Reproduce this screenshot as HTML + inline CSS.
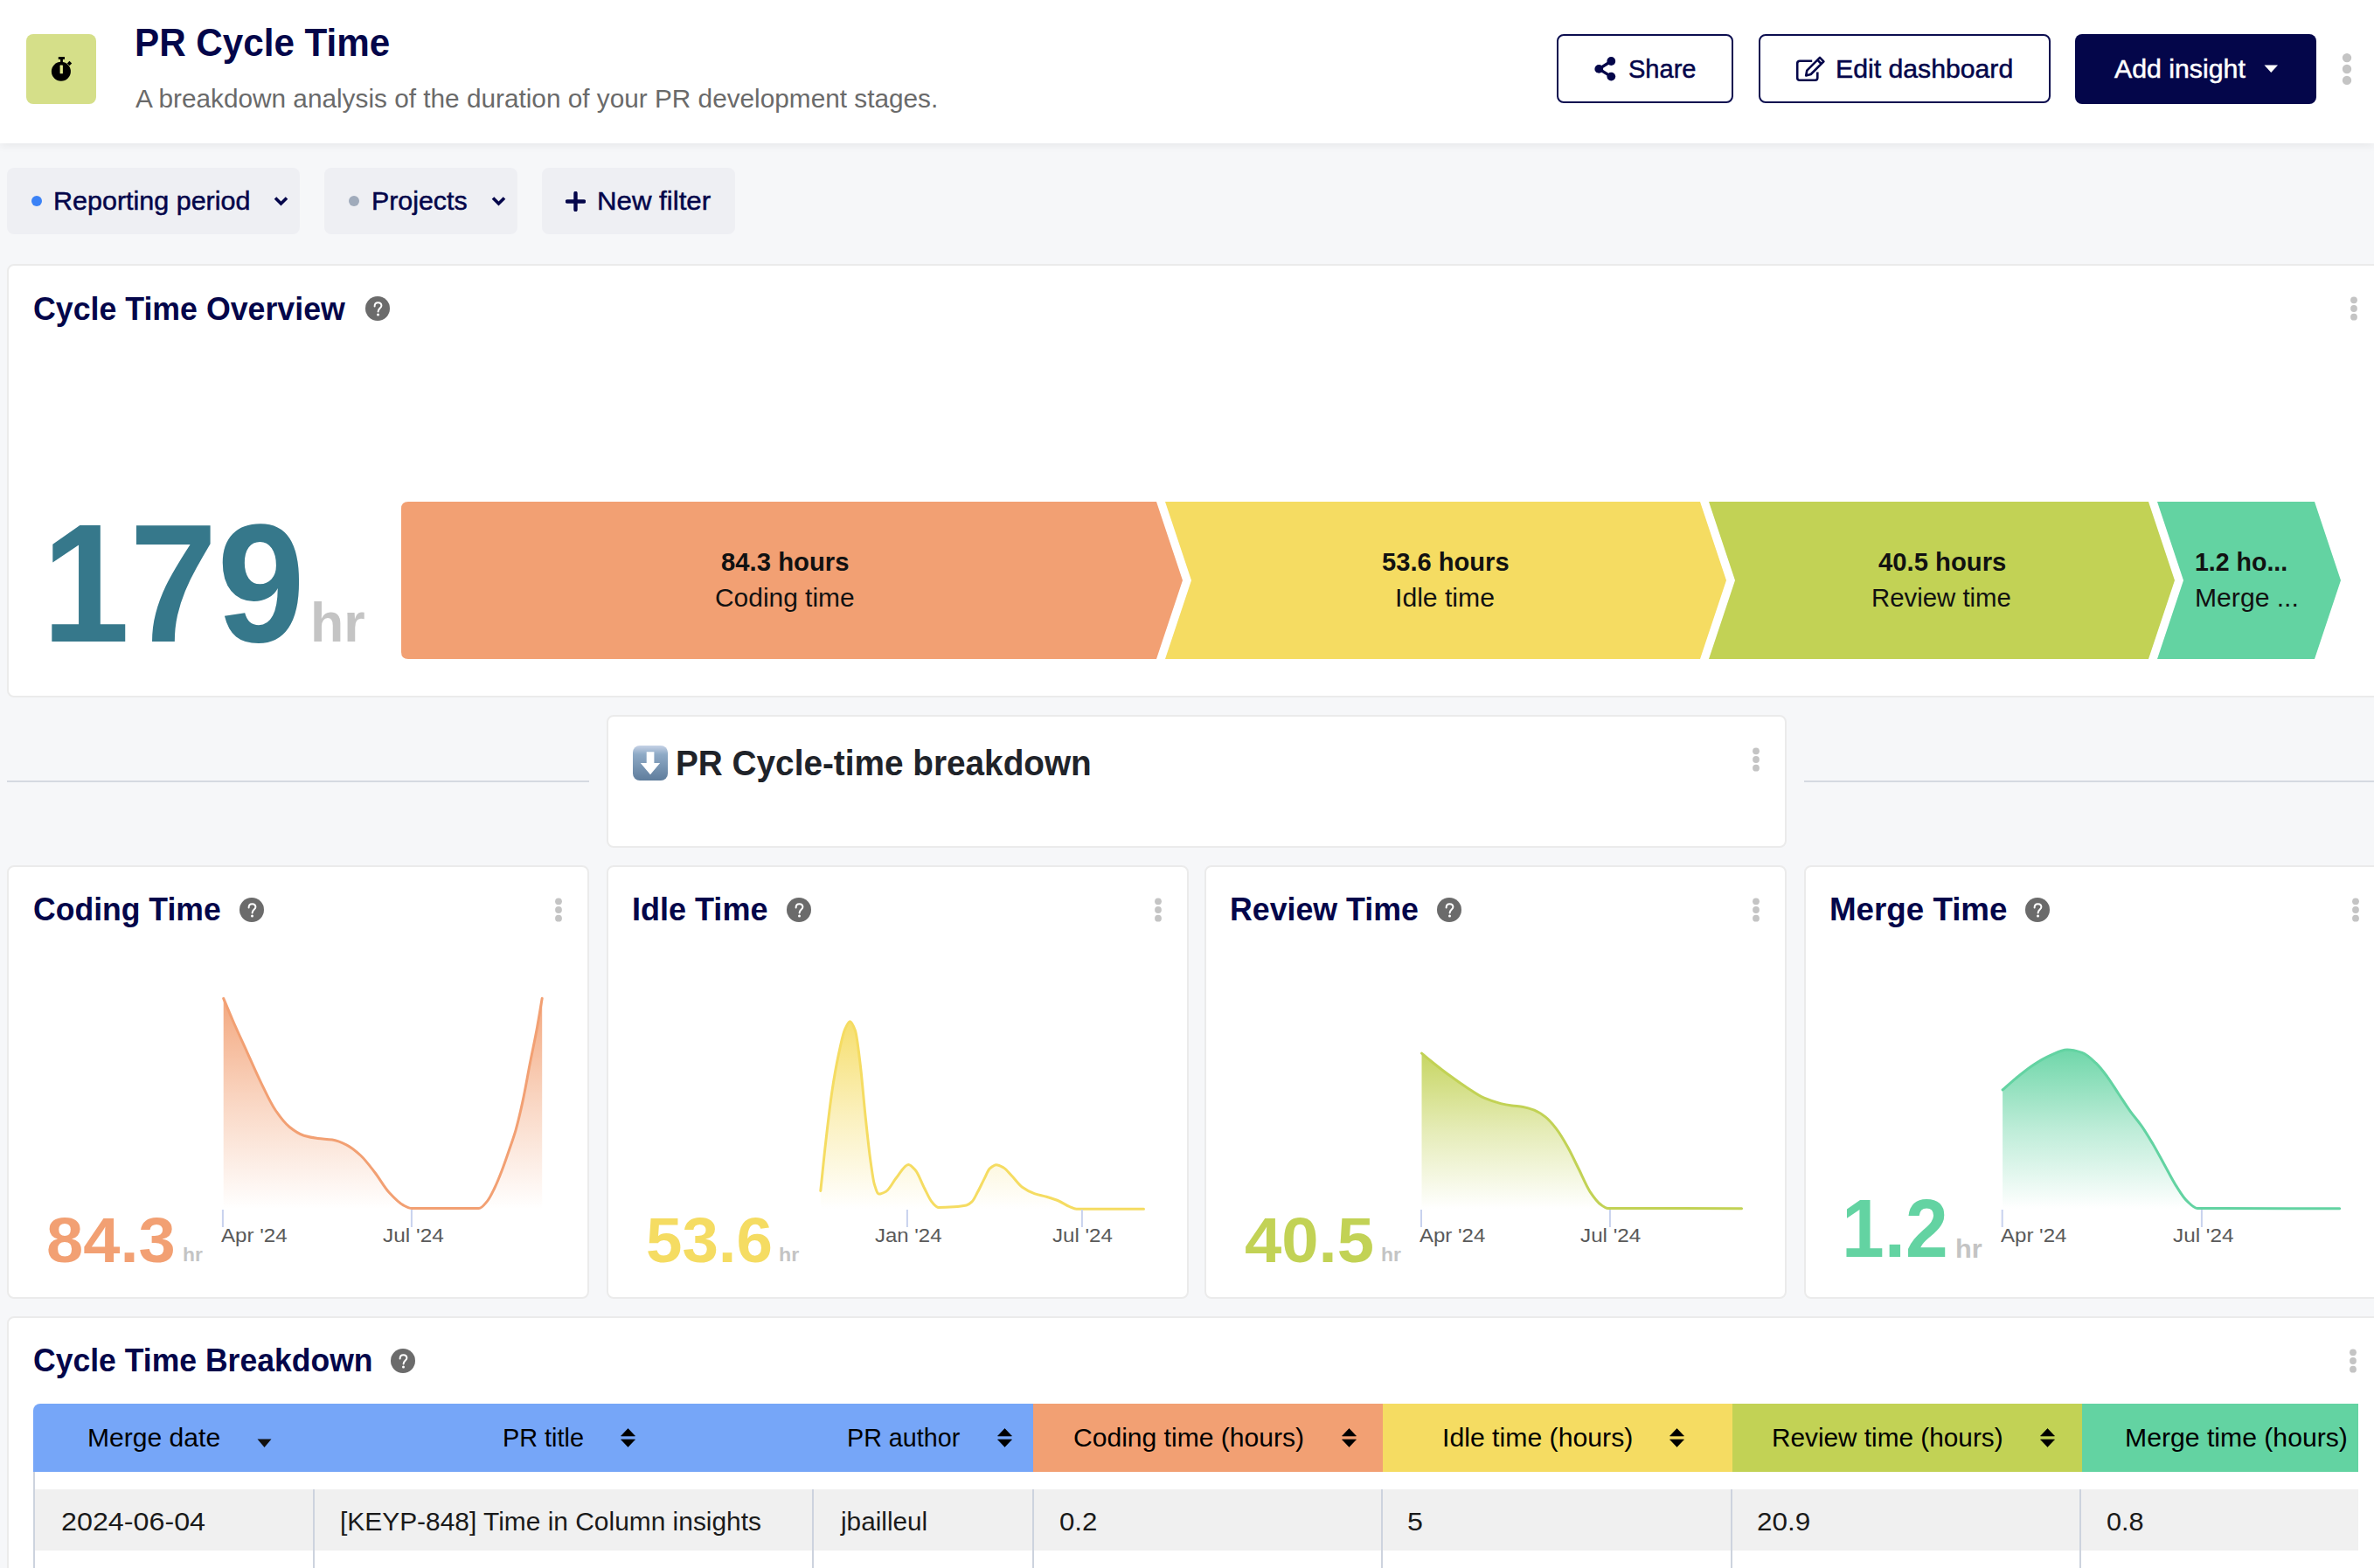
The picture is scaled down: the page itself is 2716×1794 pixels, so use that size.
<!DOCTYPE html><html><head><meta charset="utf-8"><style>
html,body{margin:0;padding:0;width:2716px;height:1794px;overflow:hidden;background:#f6f7f9;font-family:"Liberation Sans",sans-serif;}
.ab{position:absolute;display:block}
.tx{position:absolute;white-space:nowrap;transform-origin:0 0;font-family:"Liberation Sans",sans-serif;}
.card{position:absolute;background:#fff;border:2px solid #ebebeb;border-radius:8px;box-sizing:border-box}
.pill{position:absolute;background:#eeeff3;border-radius:8px;top:192px;height:76px}
</style></head><body>
<div class="ab" style="left:0;top:0;width:2716px;height:164px;background:#fff;box-shadow:0 2px 10px rgba(0,0,0,0.07)"></div>
<div class="ab" style="left:30px;top:39px;width:80px;height:80px;border-radius:8px;background:#d5df89"></div>
<svg class="ab" style="left:56px;top:63px" width="30" height="32" viewBox="0 0 30 32"><rect x="10.8" y="2.1" width="7.2" height="2.8" fill="#000"/><rect x="13.1" y="4" width="2.8" height="5" fill="#000"/><rect x="21.6" y="7.6" width="3.8" height="3.8" transform="rotate(45 23.5 9.5)" fill="#000"/><circle cx="13.9" cy="18.7" r="11" fill="#000"/><rect x="12.6" y="11.6" width="3.3" height="9.7" rx="0.6" fill="#dfe88c"/></svg>
<div class="ab" style="left:1781px;top:39px;width:202px;height:79px;box-sizing:border-box;border:2.5px solid #0b0d4f;border-radius:8px"></div>
<svg class="ab" style="left:1822px;top:63px" width="28" height="31" viewBox="0 0 28 31"><line x1="21.3" y1="7" x2="7.3" y2="15.9" stroke="#04064a" stroke-width="3.4"/><line x1="21.3" y1="24.6" x2="7.3" y2="15.9" stroke="#04064a" stroke-width="3.4"/><circle cx="21.3" cy="7" r="4.9" fill="#04064a"/><circle cx="7.3" cy="15.9" r="4.9" fill="#04064a"/><circle cx="21.3" cy="24.6" r="4.9" fill="#04064a"/></svg>
<div class="ab" style="left:2012px;top:39px;width:334px;height:79px;box-sizing:border-box;border:2.5px solid #0b0d4f;border-radius:8px"></div>
<svg class="ab" style="left:2054px;top:63px" width="36" height="32" viewBox="0 0 36 32"><path d="M19.2,6.7 H5 a2.8,2.8 0 0 0 -2.8,2.8 V26 a2.8,2.8 0 0 0 2.8,2.8 H22.5 a2.8,2.8 0 0 0 2.8,-2.8 V19.5" fill="none" stroke="#04064a" stroke-width="2.6"/><path d="M12.2,23.4 L13.3,17.6 L28,2.9 L32.4,7.3 L17.7,22 Z M25.3,5.6 L29.7,10" fill="none" stroke="#04064a" stroke-width="2.6" stroke-linejoin="round"/></svg>
<div class="ab" style="left:2374px;top:39px;width:276px;height:80px;border-radius:8px;background:#04064a"></div>
<svg class="ab" style="left:2590px;top:74px" width="17" height="10" viewBox="0 0 17 10"><path d="M0.5,0.5 H16 L8.25,9 Z" fill="#fff"/></svg>
<svg class="ab" style="left:2679.0px;top:58.5px" width="12" height="40" viewBox="0 0 12 40"><circle cx="6" cy="7.1" r="5.2" fill="#c4c4c4"/><circle cx="6" cy="20" r="5.2" fill="#c4c4c4"/><circle cx="6" cy="32.9" r="5.2" fill="#c4c4c4"/></svg>
<div class="pill" style="left:8px;width:335px"></div>
<div class="ab" style="left:36px;top:224px;width:12px;height:12px;border-radius:6px;background:#3b82f6"></div>
<svg class="ab" style="left:313px;top:224px" width="17" height="12" viewBox="0 0 17 12"><path d="M2,2.5 L8.5,9 L15,2.5" fill="none" stroke="#04064a" stroke-width="3.6"/></svg>
<div class="pill" style="left:371px;width:221px"></div>
<div class="ab" style="left:399px;top:224px;width:12px;height:12px;border-radius:6px;background:#a0abbb"></div>
<svg class="ab" style="left:562px;top:224px" width="17" height="12" viewBox="0 0 17 12"><path d="M2,2.5 L8.5,9 L15,2.5" fill="none" stroke="#04064a" stroke-width="3.6"/></svg>
<div class="pill" style="left:620px;width:221px"></div>
<svg class="ab" style="left:647px;top:219px" width="23" height="23" viewBox="0 0 23 23"><path d="M11.5,2 V21 M2,11.5 H21" stroke="#04064a" stroke-width="4.4" stroke-linecap="round"/></svg>
<div class="card" style="left:8px;top:302px;width:2740px;height:496px"></div>
<svg class="ab" style="left:417.7px;top:339.0px" width="28" height="28" viewBox="0 0 28 28"><circle cx="14" cy="14" r="14" fill="#6b6b6b"/><path d="M10.6,11.4 C10.6,8.6 12.2,7.2 14.5,7.2 C16.9,7.2 18.4,8.8 18.4,10.8 C18.4,13.4 14.6,13.9 14.6,17.6" fill="none" stroke="#fff" stroke-width="2" stroke-linecap="round"/><circle cx="14.5" cy="21" r="1.5" fill="#fff"/></svg>
<svg class="ab" style="left:2687.0px;top:333.0px" width="12" height="40" viewBox="0 0 12 40"><circle cx="6" cy="10.35" r="3.9" fill="#c4c4c4"/><circle cx="6" cy="20" r="3.9" fill="#c4c4c4"/><circle cx="6" cy="29.65" r="3.9" fill="#c4c4c4"/></svg>
<svg class="ab" style="left:0;top:0" width="2716" height="1794" viewBox="0 0 2716 1794">
<path d="M467,574 H1323 L1353,664 L1323,754 H467 Q459,754 459,746 V582 Q459,574 467,574 Z" fill="#f2a073"/>
<path d="M1333,574 H1945 L1975,664 L1945,754 H1333 L1363,664 Z" fill="#f5dc62"/>
<path d="M1955,574 H2458 L2488,664 L2458,754 H1955 L1985,664 Z" fill="#c2d255"/>
<path d="M2468,574 H2648 L2678,664 L2648,754 H2468 L2498,664 Z" fill="#63d3a2"/>
</svg>
<div class="ab" style="left:8px;top:893px;width:666px;height:2px;background:#d5d9e1"></div>
<div class="ab" style="left:2064px;top:893px;width:652px;height:2px;background:#d5d9e1"></div>
<div class="card" style="left:694px;top:818px;width:1350px;height:152px"></div>
<svg class="ab" style="left:724px;top:853px" width="40" height="40" viewBox="0 0 40 40"><defs><linearGradient id="em" x1="0" y1="0" x2="0" y2="1"><stop offset="0" stop-color="#c6d2e6"/><stop offset="0.25" stop-color="#8eaac6"/><stop offset="1" stop-color="#5f7d9c"/></linearGradient></defs><rect x="0" y="0" width="40" height="40" rx="8" fill="url(#em)"/><path d="M15.7,7.3 H24.4 V20 H31.1 L20,33.2 L8.8,20 H15.7 Z" fill="#fff"/></svg>
<svg class="ab" style="left:2003.0px;top:849.0px" width="12" height="40" viewBox="0 0 12 40"><circle cx="6" cy="10.35" r="3.9" fill="#c4c4c4"/><circle cx="6" cy="20" r="3.9" fill="#c4c4c4"/><circle cx="6" cy="29.65" r="3.9" fill="#c4c4c4"/></svg>
<div class="card" style="left:8px;top:990px;width:666px;height:496px"></div>
<svg class="ab" style="left:273.8px;top:1026.7px" width="28" height="28" viewBox="0 0 28 28"><circle cx="14" cy="14" r="14" fill="#6b6b6b"/><path d="M10.6,11.4 C10.6,8.6 12.2,7.2 14.5,7.2 C16.9,7.2 18.4,8.8 18.4,10.8 C18.4,13.4 14.6,13.9 14.6,17.6" fill="none" stroke="#fff" stroke-width="2" stroke-linecap="round"/><circle cx="14.5" cy="21" r="1.5" fill="#fff"/></svg>
<svg class="ab" style="left:633.0px;top:1021.0px" width="12" height="40" viewBox="0 0 12 40"><circle cx="6" cy="10.35" r="3.9" fill="#c4c4c4"/><circle cx="6" cy="20" r="3.9" fill="#c4c4c4"/><circle cx="6" cy="29.65" r="3.9" fill="#c4c4c4"/></svg>
<div class="card" style="left:694px;top:990px;width:666px;height:496px"></div>
<svg class="ab" style="left:899.8px;top:1026.7px" width="28" height="28" viewBox="0 0 28 28"><circle cx="14" cy="14" r="14" fill="#6b6b6b"/><path d="M10.6,11.4 C10.6,8.6 12.2,7.2 14.5,7.2 C16.9,7.2 18.4,8.8 18.4,10.8 C18.4,13.4 14.6,13.9 14.6,17.6" fill="none" stroke="#fff" stroke-width="2" stroke-linecap="round"/><circle cx="14.5" cy="21" r="1.5" fill="#fff"/></svg>
<svg class="ab" style="left:1319.0px;top:1021.0px" width="12" height="40" viewBox="0 0 12 40"><circle cx="6" cy="10.35" r="3.9" fill="#c4c4c4"/><circle cx="6" cy="20" r="3.9" fill="#c4c4c4"/><circle cx="6" cy="29.65" r="3.9" fill="#c4c4c4"/></svg>
<div class="card" style="left:1378px;top:990px;width:666px;height:496px"></div>
<svg class="ab" style="left:1643.8px;top:1026.7px" width="28" height="28" viewBox="0 0 28 28"><circle cx="14" cy="14" r="14" fill="#6b6b6b"/><path d="M10.6,11.4 C10.6,8.6 12.2,7.2 14.5,7.2 C16.9,7.2 18.4,8.8 18.4,10.8 C18.4,13.4 14.6,13.9 14.6,17.6" fill="none" stroke="#fff" stroke-width="2" stroke-linecap="round"/><circle cx="14.5" cy="21" r="1.5" fill="#fff"/></svg>
<svg class="ab" style="left:2003.0px;top:1021.0px" width="12" height="40" viewBox="0 0 12 40"><circle cx="6" cy="10.35" r="3.9" fill="#c4c4c4"/><circle cx="6" cy="20" r="3.9" fill="#c4c4c4"/><circle cx="6" cy="29.65" r="3.9" fill="#c4c4c4"/></svg>
<div class="card" style="left:2064px;top:990px;width:666px;height:496px"></div>
<svg class="ab" style="left:2316.9px;top:1026.7px" width="28" height="28" viewBox="0 0 28 28"><circle cx="14" cy="14" r="14" fill="#6b6b6b"/><path d="M10.6,11.4 C10.6,8.6 12.2,7.2 14.5,7.2 C16.9,7.2 18.4,8.8 18.4,10.8 C18.4,13.4 14.6,13.9 14.6,17.6" fill="none" stroke="#fff" stroke-width="2" stroke-linecap="round"/><circle cx="14.5" cy="21" r="1.5" fill="#fff"/></svg>
<svg class="ab" style="left:2689.0px;top:1021.0px" width="12" height="40" viewBox="0 0 12 40"><circle cx="6" cy="10.35" r="3.9" fill="#c4c4c4"/><circle cx="6" cy="20" r="3.9" fill="#c4c4c4"/><circle cx="6" cy="29.65" r="3.9" fill="#c4c4c4"/></svg>
<svg class="ab" style="left:0;top:0" width="2716" height="1794" viewBox="0 0 2716 1794">
<defs>
<linearGradient id="g_coding" x1="0" y1="0" x2="0" y2="1"><stop offset="0" stop-color="#f2a073" stop-opacity="0.92"/><stop offset="0.5" stop-color="#f2a073" stop-opacity="0.42"/><stop offset="1" stop-color="#f2a073" stop-opacity="0.0"/></linearGradient>
<linearGradient id="g_idle" x1="0" y1="0" x2="0" y2="1"><stop offset="0" stop-color="#f5dc62" stop-opacity="0.92"/><stop offset="0.5" stop-color="#f5dc62" stop-opacity="0.42"/><stop offset="1" stop-color="#f5dc62" stop-opacity="0.0"/></linearGradient>
<linearGradient id="g_review" x1="0" y1="0" x2="0" y2="1"><stop offset="0" stop-color="#c2d255" stop-opacity="0.92"/><stop offset="0.5" stop-color="#c2d255" stop-opacity="0.42"/><stop offset="1" stop-color="#c2d255" stop-opacity="0.0"/></linearGradient>
<linearGradient id="g_merge" x1="0" y1="0" x2="0" y2="1"><stop offset="0" stop-color="#63d3a2" stop-opacity="0.92"/><stop offset="0.5" stop-color="#63d3a2" stop-opacity="0.42"/><stop offset="1" stop-color="#63d3a2" stop-opacity="0.0"/></linearGradient>
</defs>
<path d="M255.7,1142.3 C259.2,1150.7 262.8,1159.4 266.3,1167.5 C271.7,1179.9 277.1,1191.4 282.5,1203.3 C287.9,1215.3 293.4,1228.0 298.8,1239.1 C304.2,1250.1 309.6,1262.1 315.0,1270.0 C320.4,1278.0 325.9,1285.2 331.3,1289.5 C336.7,1293.8 342.2,1297.6 347.6,1299.2 C353.0,1300.8 358.4,1301.8 363.8,1302.5 C369.2,1303.2 374.7,1303.3 380.1,1304.1 C385.5,1304.9 390.9,1307.2 396.3,1309.8 C401.7,1312.4 407.2,1317.0 412.6,1322.0 C418.0,1327.0 423.5,1334.5 428.9,1341.5 C434.3,1348.5 439.7,1358.4 445.1,1364.3 C450.5,1370.2 456.0,1376.1 461.4,1378.9 C464.7,1380.6 468.1,1382.6 471.4,1382.6 C496.9,1382.6 522.3,1382.6 547.8,1382.6 C551.1,1382.6 554.3,1378.0 557.6,1374.1 C560.3,1370.9 563.0,1365.0 565.7,1359.5 C568.4,1353.9 571.2,1347.0 573.9,1340.0 C576.6,1333.0 579.3,1325.1 582.0,1317.2 C584.7,1309.3 587.4,1302.2 590.1,1292.8 C592.8,1283.2 595.6,1271.3 598.3,1258.6 C601.0,1246.1 603.7,1230.1 606.4,1216.3 C609.1,1202.5 611.8,1190.4 614.5,1175.7 C616.4,1165.4 618.3,1153.4 620.2,1142.3 L620.2,1383.0 L255.7,1383.0 Z" fill="url(#g_coding)"/>
<path d="M255.7,1142.3 C259.2,1150.7 262.8,1159.4 266.3,1167.5 C271.7,1179.9 277.1,1191.4 282.5,1203.3 C287.9,1215.3 293.4,1228.0 298.8,1239.1 C304.2,1250.1 309.6,1262.1 315.0,1270.0 C320.4,1278.0 325.9,1285.2 331.3,1289.5 C336.7,1293.8 342.2,1297.6 347.6,1299.2 C353.0,1300.8 358.4,1301.8 363.8,1302.5 C369.2,1303.2 374.7,1303.3 380.1,1304.1 C385.5,1304.9 390.9,1307.2 396.3,1309.8 C401.7,1312.4 407.2,1317.0 412.6,1322.0 C418.0,1327.0 423.5,1334.5 428.9,1341.5 C434.3,1348.5 439.7,1358.4 445.1,1364.3 C450.5,1370.2 456.0,1376.1 461.4,1378.9 C464.7,1380.6 468.1,1382.6 471.4,1382.6 C496.9,1382.6 522.3,1382.6 547.8,1382.6 C551.1,1382.6 554.3,1378.0 557.6,1374.1 C560.3,1370.9 563.0,1365.0 565.7,1359.5 C568.4,1353.9 571.2,1347.0 573.9,1340.0 C576.6,1333.0 579.3,1325.1 582.0,1317.2 C584.7,1309.3 587.4,1302.2 590.1,1292.8 C592.8,1283.2 595.6,1271.3 598.3,1258.6 C601.0,1246.1 603.7,1230.1 606.4,1216.3 C609.1,1202.5 611.8,1190.4 614.5,1175.7 C616.4,1165.4 618.3,1153.4 620.2,1142.3" fill="none" stroke="#f2a073" stroke-width="3" stroke-linecap="round" stroke-linejoin="round"/>
<path d="M938.8,1362.4 C940.8,1343.8 942.7,1323.8 944.7,1306.7 C947.1,1285.5 949.6,1264.1 952.0,1248.0 C954.4,1231.9 956.9,1218.2 959.3,1206.9 C961.8,1195.4 964.2,1182.9 966.7,1177.6 C968.6,1173.4 970.6,1168.8 972.5,1168.8 C974.5,1168.8 976.4,1173.7 978.4,1179.1 C980.4,1184.5 982.3,1202.8 984.3,1218.7 C986.2,1234.3 988.2,1259.3 990.1,1277.4 C992.1,1295.8 994.0,1314.9 996.0,1328.7 C997.5,1339.0 998.9,1350.4 1000.4,1355.1 C1002.1,1360.6 1003.8,1366.1 1005.5,1366.1 C1008.2,1366.1 1010.9,1364.7 1013.6,1363.2 C1017.5,1361.1 1021.4,1352.5 1025.3,1347.8 C1030.0,1342.2 1034.6,1332.4 1039.3,1332.4 C1042.0,1332.4 1044.7,1335.9 1047.4,1339.0 C1050.8,1342.9 1054.2,1353.0 1057.6,1359.5 C1060.5,1365.1 1063.5,1372.4 1066.4,1375.6 C1068.9,1378.3 1071.3,1381.5 1073.8,1381.5 C1079.7,1381.5 1085.5,1381.2 1091.4,1380.8 C1096.1,1380.5 1100.9,1380.1 1105.6,1379.0 C1107.7,1378.5 1109.9,1376.9 1112.0,1374.9 C1114.2,1372.9 1116.3,1367.8 1118.5,1363.8 C1121.0,1359.2 1123.5,1353.7 1126.0,1348.9 C1128.1,1344.8 1130.3,1338.8 1132.4,1336.9 C1134.9,1334.7 1137.4,1332.7 1139.9,1332.7 C1142.7,1332.7 1145.4,1334.4 1148.2,1336.0 C1151.3,1337.7 1154.4,1342.0 1157.5,1345.2 C1161.5,1349.3 1165.5,1355.3 1169.5,1358.2 C1174.1,1361.5 1178.8,1364.0 1183.4,1365.6 C1188.0,1367.2 1192.7,1367.9 1197.3,1369.3 C1201.9,1370.7 1206.6,1372.1 1211.2,1374.0 C1215.2,1375.7 1219.3,1378.8 1223.3,1380.4 C1226.1,1381.5 1228.8,1383.2 1231.6,1383.2 C1257.2,1383.2 1282.9,1383.2 1308.5,1383.2 L1308.5,1383.0 L938.8,1383.0 Z" fill="url(#g_idle)"/>
<path d="M938.8,1362.4 C940.8,1343.8 942.7,1323.8 944.7,1306.7 C947.1,1285.5 949.6,1264.1 952.0,1248.0 C954.4,1231.9 956.9,1218.2 959.3,1206.9 C961.8,1195.4 964.2,1182.9 966.7,1177.6 C968.6,1173.4 970.6,1168.8 972.5,1168.8 C974.5,1168.8 976.4,1173.7 978.4,1179.1 C980.4,1184.5 982.3,1202.8 984.3,1218.7 C986.2,1234.3 988.2,1259.3 990.1,1277.4 C992.1,1295.8 994.0,1314.9 996.0,1328.7 C997.5,1339.0 998.9,1350.4 1000.4,1355.1 C1002.1,1360.6 1003.8,1366.1 1005.5,1366.1 C1008.2,1366.1 1010.9,1364.7 1013.6,1363.2 C1017.5,1361.1 1021.4,1352.5 1025.3,1347.8 C1030.0,1342.2 1034.6,1332.4 1039.3,1332.4 C1042.0,1332.4 1044.7,1335.9 1047.4,1339.0 C1050.8,1342.9 1054.2,1353.0 1057.6,1359.5 C1060.5,1365.1 1063.5,1372.4 1066.4,1375.6 C1068.9,1378.3 1071.3,1381.5 1073.8,1381.5 C1079.7,1381.5 1085.5,1381.2 1091.4,1380.8 C1096.1,1380.5 1100.9,1380.1 1105.6,1379.0 C1107.7,1378.5 1109.9,1376.9 1112.0,1374.9 C1114.2,1372.9 1116.3,1367.8 1118.5,1363.8 C1121.0,1359.2 1123.5,1353.7 1126.0,1348.9 C1128.1,1344.8 1130.3,1338.8 1132.4,1336.9 C1134.9,1334.7 1137.4,1332.7 1139.9,1332.7 C1142.7,1332.7 1145.4,1334.4 1148.2,1336.0 C1151.3,1337.7 1154.4,1342.0 1157.5,1345.2 C1161.5,1349.3 1165.5,1355.3 1169.5,1358.2 C1174.1,1361.5 1178.8,1364.0 1183.4,1365.6 C1188.0,1367.2 1192.7,1367.9 1197.3,1369.3 C1201.9,1370.7 1206.6,1372.1 1211.2,1374.0 C1215.2,1375.7 1219.3,1378.8 1223.3,1380.4 C1226.1,1381.5 1228.8,1383.2 1231.6,1383.2 C1257.2,1383.2 1282.9,1383.2 1308.5,1383.2" fill="none" stroke="#f5dc62" stroke-width="3" stroke-linecap="round" stroke-linejoin="round"/>
<path d="M1626.5,1205.2 C1631.2,1209.0 1635.8,1213.0 1640.5,1216.7 C1646.9,1221.8 1653.2,1226.7 1659.6,1231.3 C1666.0,1236.0 1672.4,1240.6 1678.8,1244.7 C1685.2,1248.8 1691.5,1253.5 1697.9,1256.2 C1704.3,1258.9 1710.6,1261.1 1717.0,1262.6 C1721.3,1263.6 1725.5,1264.3 1729.8,1264.9 C1734.0,1265.5 1738.3,1265.7 1742.5,1266.4 C1746.8,1267.1 1751.0,1268.5 1755.3,1270.2 C1759.5,1271.9 1763.8,1274.6 1768.0,1277.9 C1772.3,1281.2 1776.5,1286.3 1780.8,1291.9 C1785.0,1297.4 1789.3,1304.8 1793.5,1312.3 C1797.8,1319.9 1802.0,1329.3 1806.3,1337.8 C1810.5,1346.3 1814.8,1357.0 1819.0,1363.3 C1823.3,1369.7 1827.5,1375.6 1831.8,1378.6 C1834.3,1380.4 1836.9,1382.5 1839.4,1382.5 C1844.6,1382.5 1849.8,1382.5 1855.0,1382.5 C1900.9,1382.5 1946.7,1382.7 1992.6,1382.8 L1992.6,1383.0 L1626.5,1383.0 Z" fill="url(#g_review)"/>
<path d="M1626.5,1205.2 C1631.2,1209.0 1635.8,1213.0 1640.5,1216.7 C1646.9,1221.8 1653.2,1226.7 1659.6,1231.3 C1666.0,1236.0 1672.4,1240.6 1678.8,1244.7 C1685.2,1248.8 1691.5,1253.5 1697.9,1256.2 C1704.3,1258.9 1710.6,1261.1 1717.0,1262.6 C1721.3,1263.6 1725.5,1264.3 1729.8,1264.9 C1734.0,1265.5 1738.3,1265.7 1742.5,1266.4 C1746.8,1267.1 1751.0,1268.5 1755.3,1270.2 C1759.5,1271.9 1763.8,1274.6 1768.0,1277.9 C1772.3,1281.2 1776.5,1286.3 1780.8,1291.9 C1785.0,1297.4 1789.3,1304.8 1793.5,1312.3 C1797.8,1319.9 1802.0,1329.3 1806.3,1337.8 C1810.5,1346.3 1814.8,1357.0 1819.0,1363.3 C1823.3,1369.7 1827.5,1375.6 1831.8,1378.6 C1834.3,1380.4 1836.9,1382.5 1839.4,1382.5 C1844.6,1382.5 1849.8,1382.5 1855.0,1382.5 C1900.9,1382.5 1946.7,1382.7 1992.6,1382.8" fill="none" stroke="#c2d255" stroke-width="3" stroke-linecap="round" stroke-linejoin="round"/>
<path d="M2291.1,1246.9 C2296.1,1242.5 2301.2,1237.9 2306.2,1233.8 C2312.7,1228.5 2319.3,1223.1 2325.8,1218.8 C2332.3,1214.5 2338.9,1210.5 2345.4,1207.7 C2351.9,1204.9 2358.5,1201.1 2365.0,1201.1 C2370.7,1201.1 2376.3,1202.6 2382.0,1204.4 C2387.2,1206.0 2392.5,1211.3 2397.7,1216.2 C2402.1,1220.3 2406.4,1226.0 2410.8,1231.8 C2415.1,1237.6 2419.5,1245.0 2423.8,1251.5 C2428.2,1258.1 2432.5,1265.0 2436.9,1271.1 C2441.3,1277.2 2445.6,1281.9 2450.0,1288.1 C2454.4,1294.3 2458.7,1301.6 2463.1,1309.0 C2467.4,1316.3 2471.8,1324.7 2476.1,1332.5 C2480.5,1340.4 2484.8,1349.2 2489.2,1356.1 C2493.6,1363.0 2497.9,1370.4 2502.3,1374.4 C2506.2,1378.0 2510.1,1382.5 2514.0,1382.5 C2519.3,1382.5 2524.7,1382.5 2530.0,1382.5 C2578.9,1382.5 2627.8,1382.7 2676.7,1382.8 L2676.7,1383.0 L2291.1,1383.0 Z" fill="url(#g_merge)"/>
<path d="M2291.1,1246.9 C2296.1,1242.5 2301.2,1237.9 2306.2,1233.8 C2312.7,1228.5 2319.3,1223.1 2325.8,1218.8 C2332.3,1214.5 2338.9,1210.5 2345.4,1207.7 C2351.9,1204.9 2358.5,1201.1 2365.0,1201.1 C2370.7,1201.1 2376.3,1202.6 2382.0,1204.4 C2387.2,1206.0 2392.5,1211.3 2397.7,1216.2 C2402.1,1220.3 2406.4,1226.0 2410.8,1231.8 C2415.1,1237.6 2419.5,1245.0 2423.8,1251.5 C2428.2,1258.1 2432.5,1265.0 2436.9,1271.1 C2441.3,1277.2 2445.6,1281.9 2450.0,1288.1 C2454.4,1294.3 2458.7,1301.6 2463.1,1309.0 C2467.4,1316.3 2471.8,1324.7 2476.1,1332.5 C2480.5,1340.4 2484.8,1349.2 2489.2,1356.1 C2493.6,1363.0 2497.9,1370.4 2502.3,1374.4 C2506.2,1378.0 2510.1,1382.5 2514.0,1382.5 C2519.3,1382.5 2524.7,1382.5 2530.0,1382.5 C2578.9,1382.5 2627.8,1382.7 2676.7,1382.8" fill="none" stroke="#63d3a2" stroke-width="3" stroke-linecap="round" stroke-linejoin="round"/>
<rect x="253.9" y="1384" width="2" height="20" fill="#c8d2ee"/>
<rect x="469.9" y="1384" width="2" height="20" fill="#c8d2ee"/>
<rect x="1036.9" y="1384" width="2" height="20" fill="#c8d2ee"/>
<rect x="1236.9" y="1384" width="2" height="20" fill="#c8d2ee"/>
<rect x="1625.0" y="1384" width="2" height="20" fill="#c8d2ee"/>
<rect x="1840.9" y="1384" width="2" height="20" fill="#c8d2ee"/>
<rect x="2289.7" y="1384" width="2" height="20" fill="#c8d2ee"/>
<rect x="2517.9" y="1384" width="2" height="20" fill="#c8d2ee"/>
</svg>
<div class="card" style="left:8px;top:1506px;width:2740px;height:400px"></div>
<svg class="ab" style="left:446.8px;top:1542.9px" width="28" height="28" viewBox="0 0 28 28"><circle cx="14" cy="14" r="14" fill="#6b6b6b"/><path d="M10.6,11.4 C10.6,8.6 12.2,7.2 14.5,7.2 C16.9,7.2 18.4,8.8 18.4,10.8 C18.4,13.4 14.6,13.9 14.6,17.6" fill="none" stroke="#fff" stroke-width="2" stroke-linecap="round"/><circle cx="14.5" cy="21" r="1.5" fill="#fff"/></svg>
<svg class="ab" style="left:2686.0px;top:1537.0px" width="12" height="40" viewBox="0 0 12 40"><circle cx="6" cy="10.35" r="3.9" fill="#c4c4c4"/><circle cx="6" cy="20" r="3.9" fill="#c4c4c4"/><circle cx="6" cy="29.65" r="3.9" fill="#c4c4c4"/></svg>
<div class="ab" style="left:38px;top:1606px;width:1144px;height:78px;background:#76a6f8;border-top-left-radius:8px"></div>
<div class="ab" style="left:1182px;top:1606px;width:400px;height:78px;background:#f2a073"></div>
<div class="ab" style="left:1582px;top:1606px;width:400px;height:78px;background:#f5dc62"></div>
<div class="ab" style="left:1982px;top:1606px;width:399.5px;height:78px;background:#c2d255"></div>
<div class="ab" style="left:2381.5px;top:1606px;width:316.5px;height:78px;background:#63d3a2"></div>
<div class="ab" style="left:40px;top:1704px;width:2658px;height:70px;background:#f0f0f0"></div>
<div class="ab" style="left:38px;top:1684px;width:2px;height:110px;background:#cdd3de"></div>
<div class="ab" style="left:357.7px;top:1704px;width:2px;height:90px;background:#cdd3de"></div>
<div class="ab" style="left:929.0px;top:1704px;width:2px;height:90px;background:#cdd3de"></div>
<div class="ab" style="left:1180.5px;top:1704px;width:2px;height:90px;background:#cdd3de"></div>
<div class="ab" style="left:1579.7px;top:1704px;width:2px;height:90px;background:#cdd3de"></div>
<div class="ab" style="left:1979.5px;top:1704px;width:2px;height:90px;background:#cdd3de"></div>
<div class="ab" style="left:2378.6px;top:1704px;width:2px;height:90px;background:#cdd3de"></div>
<svg class="ab" style="left:710.4px;top:1634.0px" width="17" height="22" viewBox="0 0 17 22"><path d="M8.5,0.5 L16.5,9 L0.5,9 Z M0.5,13 L16.5,13 L8.5,21.5 Z" fill="#000" stroke="#000" stroke-width="0.6" stroke-linejoin="round"/></svg>
<svg class="ab" style="left:1141.3px;top:1634.0px" width="17" height="22" viewBox="0 0 17 22"><path d="M8.5,0.5 L16.5,9 L0.5,9 Z M0.5,13 L16.5,13 L8.5,21.5 Z" fill="#000" stroke="#000" stroke-width="0.6" stroke-linejoin="round"/></svg>
<svg class="ab" style="left:1534.6px;top:1634.0px" width="17" height="22" viewBox="0 0 17 22"><path d="M8.5,0.5 L16.5,9 L0.5,9 Z M0.5,13 L16.5,13 L8.5,21.5 Z" fill="#000" stroke="#000" stroke-width="0.6" stroke-linejoin="round"/></svg>
<svg class="ab" style="left:1910.0px;top:1634.0px" width="17" height="22" viewBox="0 0 17 22"><path d="M8.5,0.5 L16.5,9 L0.5,9 Z M0.5,13 L16.5,13 L8.5,21.5 Z" fill="#000" stroke="#000" stroke-width="0.6" stroke-linejoin="round"/></svg>
<svg class="ab" style="left:2334.0px;top:1634.0px" width="17" height="22" viewBox="0 0 17 22"><path d="M8.5,0.5 L16.5,9 L0.5,9 Z M0.5,13 L16.5,13 L8.5,21.5 Z" fill="#000" stroke="#000" stroke-width="0.6" stroke-linejoin="round"/></svg>
<svg class="ab" style="left:294px;top:1646px" width="17" height="11" viewBox="0 0 17 11"><path d="M0.5,0.5 H16.5 L8.5,10 Z" fill="#111"/></svg>
<div class="tx" style="left:153.96px;top:26.77px;font-size:43.86px;line-height:43.86px;font-weight:700;color:#04064a;transform:scaleX(0.9617);">PR Cycle Time</div>
<div class="tx" style="left:154.80px;top:98.09px;font-size:29.43px;line-height:29.43px;font-weight:400;color:#6a6a6a;transform:scaleX(1.0116);">A breakdown analysis of the duration of your PR development stages.</div>
<div class="tx" style="left:1862.99px;top:64.33px;font-size:29.86px;line-height:29.86px;font-weight:400;color:#04064a;transform:scaleX(0.9728);-webkit-text-stroke:0.5px currentColor;">Share</div>
<div class="tx" style="left:2100.18px;top:64.33px;font-size:29.86px;line-height:29.86px;font-weight:400;color:#04064a;transform:scaleX(1.0115);-webkit-text-stroke:0.5px currentColor;">Edit dashboard</div>
<div class="tx" style="left:2418.80px;top:64.23px;font-size:29.86px;line-height:29.86px;font-weight:400;color:#ffffff;transform:scaleX(1.0139);-webkit-text-stroke:0.5px currentColor;">Add insight</div>
<div class="tx" style="left:60.86px;top:214.86px;font-size:30.29px;line-height:30.29px;font-weight:400;color:#04064a;transform:scaleX(1.0071);-webkit-text-stroke:0.5px currentColor;">Reporting period</div>
<div class="tx" style="left:424.57px;top:214.76px;font-size:30.29px;line-height:30.29px;font-weight:400;color:#04064a;transform:scaleX(1.0017);-webkit-text-stroke:0.5px currentColor;">Projects</div>
<div class="tx" style="left:682.50px;top:214.76px;font-size:30.29px;line-height:30.29px;font-weight:400;color:#04064a;transform:scaleX(1.0308);-webkit-text-stroke:0.5px currentColor;">New filter</div>
<div class="tx" style="left:38.27px;top:335.51px;font-size:36.14px;line-height:36.14px;font-weight:700;color:#04064a;transform:scaleX(0.9889);">Cycle Time Overview</div>
<div class="tx" style="left:47.98px;top:570.68px;font-size:193.29px;line-height:193.29px;font-weight:700;color:#36788b;transform:scaleX(0.9329);">179</div>
<div class="tx" style="left:355.33px;top:681.54px;font-size:62.33px;line-height:62.33px;font-weight:700;color:#c4c4c4;transform:scaleX(1.0036);">hr</div>
<div class="tx" style="left:825.32px;top:628.21px;font-size:29.29px;line-height:29.29px;font-weight:700;color:#111111;transform:scaleX(1.0004);">84.3 hours</div>
<div class="tx" style="left:818.30px;top:670.45px;font-size:29.00px;line-height:29.00px;font-weight:400;color:#111111;transform:scaleX(1.0316);">Coding time</div>
<div class="tx" style="left:1580.93px;top:628.01px;font-size:29.29px;line-height:29.29px;font-weight:700;color:#111111;transform:scaleX(0.9941);">53.6 hours</div>
<div class="tx" style="left:1596.39px;top:670.25px;font-size:29.00px;line-height:29.00px;font-weight:400;color:#111111;transform:scaleX(1.0397);">Idle time</div>
<div class="tx" style="left:2148.66px;top:628.01px;font-size:29.29px;line-height:29.29px;font-weight:700;color:#111111;transform:scaleX(0.9994);">40.5 hours</div>
<div class="tx" style="left:2141.05px;top:670.35px;font-size:29.00px;line-height:29.00px;font-weight:400;color:#111111;transform:scaleX(1.0122);">Review time</div>
<div class="tx" style="left:2511.19px;top:628.01px;font-size:29.29px;line-height:29.29px;font-weight:700;color:#111111;transform:scaleX(0.9744);">1.2 ho...</div>
<div class="tx" style="left:2511.09px;top:670.35px;font-size:29.00px;line-height:29.00px;font-weight:400;color:#111111;transform:scaleX(1.0387);">Merge ...</div>
<div class="tx" style="left:772.88px;top:853.47px;font-size:41.14px;line-height:41.14px;font-weight:700;color:#1f2329;transform:scaleX(0.9420);">PR Cycle-time breakdown</div>
<div class="tx" style="left:37.78px;top:1022.92px;font-size:36.71px;line-height:36.71px;font-weight:700;color:#04064a;transform:scaleX(0.9692);">Coding Time</div>
<div class="tx" style="left:722.66px;top:1022.92px;font-size:36.71px;line-height:36.71px;font-weight:700;color:#04064a;transform:scaleX(0.9810);">Idle Time</div>
<div class="tx" style="left:1406.68px;top:1022.92px;font-size:36.71px;line-height:36.71px;font-weight:700;color:#04064a;transform:scaleX(0.9738);">Review Time</div>
<div class="tx" style="left:2092.61px;top:1022.92px;font-size:36.71px;line-height:36.71px;font-weight:700;color:#04064a;transform:scaleX(1.0008);">Merge Time</div>
<div class="tx" style="left:53.02px;top:1383.64px;font-size:71.43px;line-height:71.43px;font-weight:700;color:#f2a073;transform:scaleX(1.0626);">84.3</div>
<div class="tx" style="left:208.52px;top:1424.97px;font-size:22.60px;line-height:22.60px;font-weight:700;color:#c4c4c4;transform:scaleX(1.0090);">hr</div>
<div class="tx" style="left:739.36px;top:1383.54px;font-size:71.43px;line-height:71.43px;font-weight:700;color:#f5dc62;transform:scaleX(1.0432);">53.6</div>
<div class="tx" style="left:891.09px;top:1424.87px;font-size:22.60px;line-height:22.60px;font-weight:700;color:#c4c4c4;transform:scaleX(1.0282);">hr</div>
<div class="tx" style="left:1424.16px;top:1383.74px;font-size:71.43px;line-height:71.43px;font-weight:700;color:#c2d255;transform:scaleX(1.0648);">40.5</div>
<div class="tx" style="left:1579.61px;top:1425.07px;font-size:22.60px;line-height:22.60px;font-weight:700;color:#c4c4c4;transform:scaleX(1.0138);">hr</div>
<div class="tx" style="left:2106.75px;top:1359.43px;font-size:94.00px;line-height:94.00px;font-weight:700;color:#63d3a2;transform:scaleX(0.9315);">1.2</div>
<div class="tx" style="left:2237.20px;top:1413.72px;font-size:29.86px;line-height:29.86px;font-weight:700;color:#c4c4c4;transform:scaleX(1.0291);">hr</div>
<div class="tx" style="left:253.00px;top:1402.86px;font-size:22.14px;line-height:22.14px;font-weight:400;color:#5a5a5a;transform:scaleX(1.0887);">Apr '24</div>
<div class="tx" style="left:437.63px;top:1402.86px;font-size:22.14px;line-height:22.14px;font-weight:400;color:#5a5a5a;transform:scaleX(1.1041);">Jul '24</div>
<div class="tx" style="left:1001.34px;top:1402.86px;font-size:22.14px;line-height:22.14px;font-weight:400;color:#5a5a5a;transform:scaleX(1.0831);">Jan '24</div>
<div class="tx" style="left:1204.44px;top:1402.86px;font-size:22.14px;line-height:22.14px;font-weight:400;color:#5a5a5a;transform:scaleX(1.0881);">Jul '24</div>
<div class="tx" style="left:1623.90px;top:1402.86px;font-size:22.14px;line-height:22.14px;font-weight:400;color:#5a5a5a;transform:scaleX(1.0844);">Apr '24</div>
<div class="tx" style="left:1808.24px;top:1402.86px;font-size:22.14px;line-height:22.14px;font-weight:400;color:#5a5a5a;transform:scaleX(1.0961);">Jul '24</div>
<div class="tx" style="left:2288.80px;top:1402.86px;font-size:22.14px;line-height:22.14px;font-weight:400;color:#5a5a5a;transform:scaleX(1.0858);">Apr '24</div>
<div class="tx" style="left:2485.63px;top:1402.86px;font-size:22.14px;line-height:22.14px;font-weight:400;color:#5a5a5a;transform:scaleX(1.0993);">Jul '24</div>
<div class="tx" style="left:37.98px;top:1539.26px;font-size:36.43px;line-height:36.43px;font-weight:700;color:#04064a;transform:scaleX(0.9759);">Cycle Time Breakdown</div>
<div class="tx" style="left:99.69px;top:1630.77px;font-size:28.86px;line-height:28.86px;font-weight:400;color:#000000;transform:scaleX(1.0422);">Merge date</div>
<div class="tx" style="left:575.19px;top:1630.77px;font-size:28.86px;line-height:28.86px;font-weight:400;color:#000000;transform:scaleX(0.9998);">PR title</div>
<div class="tx" style="left:968.60px;top:1630.77px;font-size:28.86px;line-height:28.86px;font-weight:400;color:#000000;transform:scaleX(0.9942);">PR author</div>
<div class="tx" style="left:1227.50px;top:1630.77px;font-size:28.86px;line-height:28.86px;font-weight:400;color:#000000;transform:scaleX(1.0416);">Coding time (hours)</div>
<div class="tx" style="left:1649.88px;top:1630.77px;font-size:28.86px;line-height:28.86px;font-weight:400;color:#000000;transform:scaleX(1.0470);">Idle time (hours)</div>
<div class="tx" style="left:2026.92px;top:1630.77px;font-size:28.86px;line-height:28.86px;font-weight:400;color:#000000;transform:scaleX(1.0313);">Review time (hours)</div>
<div class="tx" style="left:2431.19px;top:1630.77px;font-size:28.86px;line-height:28.86px;font-weight:400;color:#000000;transform:scaleX(1.0456);">Merge time (hours)</div>
<div class="tx" style="left:69.99px;top:1726.09px;font-size:29.43px;line-height:29.43px;font-weight:400;color:#1a1a1a;transform:scaleX(1.0965);">2024-06-04</div>
<div class="tx" style="left:388.71px;top:1726.09px;font-size:29.43px;line-height:29.43px;font-weight:400;color:#1a1a1a;transform:scaleX(1.0164);">[KEYP-848] Time in Column insights</div>
<div class="tx" style="left:961.94px;top:1726.09px;font-size:29.43px;line-height:29.43px;font-weight:400;color:#1a1a1a;transform:scaleX(1.0107);">jbailleul</div>
<div class="tx" style="left:1211.61px;top:1726.09px;font-size:29.43px;line-height:29.43px;font-weight:400;color:#1a1a1a;transform:scaleX(1.0617);">0.2</div>
<div class="tx" style="left:1610.41px;top:1726.09px;font-size:29.43px;line-height:29.43px;font-weight:400;color:#1a1a1a;transform:scaleX(1.0945);">5</div>
<div class="tx" style="left:2010.43px;top:1726.09px;font-size:29.43px;line-height:29.43px;font-weight:400;color:#1a1a1a;transform:scaleX(1.0689);">20.9</div>
<div class="tx" style="left:2410.13px;top:1726.09px;font-size:29.43px;line-height:29.43px;font-weight:400;color:#1a1a1a;transform:scaleX(1.0422);">0.8</div>
</body></html>
